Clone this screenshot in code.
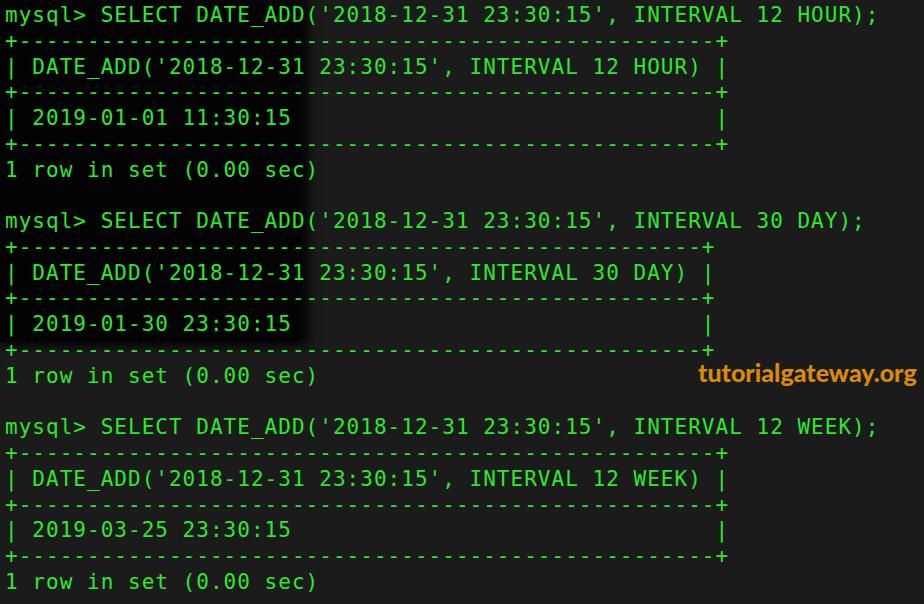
import React from "react";

const blocks = [
  {
    cmd: "mysql> SELECT DATE_ADD('2018-12-31 23:30:15', INTERVAL 12 HOUR);",
    head: "DATE_ADD('2018-12-31 23:30:15', INTERVAL 12 HOUR)",
    val: "2019-01-01 11:30:15",
  },
  {
    cmd: "mysql> SELECT DATE_ADD('2018-12-31 23:30:15', INTERVAL 30 DAY);",
    head: "DATE_ADD('2018-12-31 23:30:15', INTERVAL 30 DAY)",
    val: "2019-01-30 23:30:15",
  },
  {
    cmd: "mysql> SELECT DATE_ADD('2018-12-31 23:30:15', INTERVAL 12 WEEK);",
    head: "DATE_ADD('2018-12-31 23:30:15', INTERVAL 12 WEEK)",
    val: "2019-03-25 23:30:15",
  },
];

function buildLines() {
  const lines: string[] = [];
  blocks.forEach((b, i) => {
    const w = b.head.length;
    const border = "+" + "-".repeat(w + 2) + "+";
    lines.push(b.cmd);
    lines.push(border);
    lines.push("| " + b.head + " |");
    lines.push(border);
    lines.push("| " + b.val.padEnd(w, " ") + " |");
    lines.push(border);
    lines.push("1 row in set (0.00 sec)");
    if (i < blocks.length - 1) lines.push("");
  });
  return lines;
}

export default function App() {
  const lines = buildLines();
  return (
    <div className="relative w-[924px] h-[604px] overflow-hidden bg-[#1b1b1b]">
      <div className="absolute left-0 top-0 w-[298px] h-[342px] bg-[#030303] shadow-[6px_0_10px_4px_#030303]" />
      <div
        className="relative pl-[5px] pt-[3px] text-[21px] leading-[25.77px] tracking-[1.02px] text-[#2ee82e] whitespace-pre"
        style={{ fontFamily: '"DejaVu Sans Mono", "Liberation Mono", monospace' }}
      >
        {lines.map((l, i) => (
          <div key={i} className="h-[25.77px]">
            {l}
          </div>
        ))}
      </div>
      <div
        className="absolute left-[698px] top-[360px] text-[25px] font-black leading-none text-[#d98a0b]"
        style={{ fontFamily: 'Lato, "Noto Sans", sans-serif' }}
      >
        tutorialgateway.org
      </div>
    </div>
  );
}
